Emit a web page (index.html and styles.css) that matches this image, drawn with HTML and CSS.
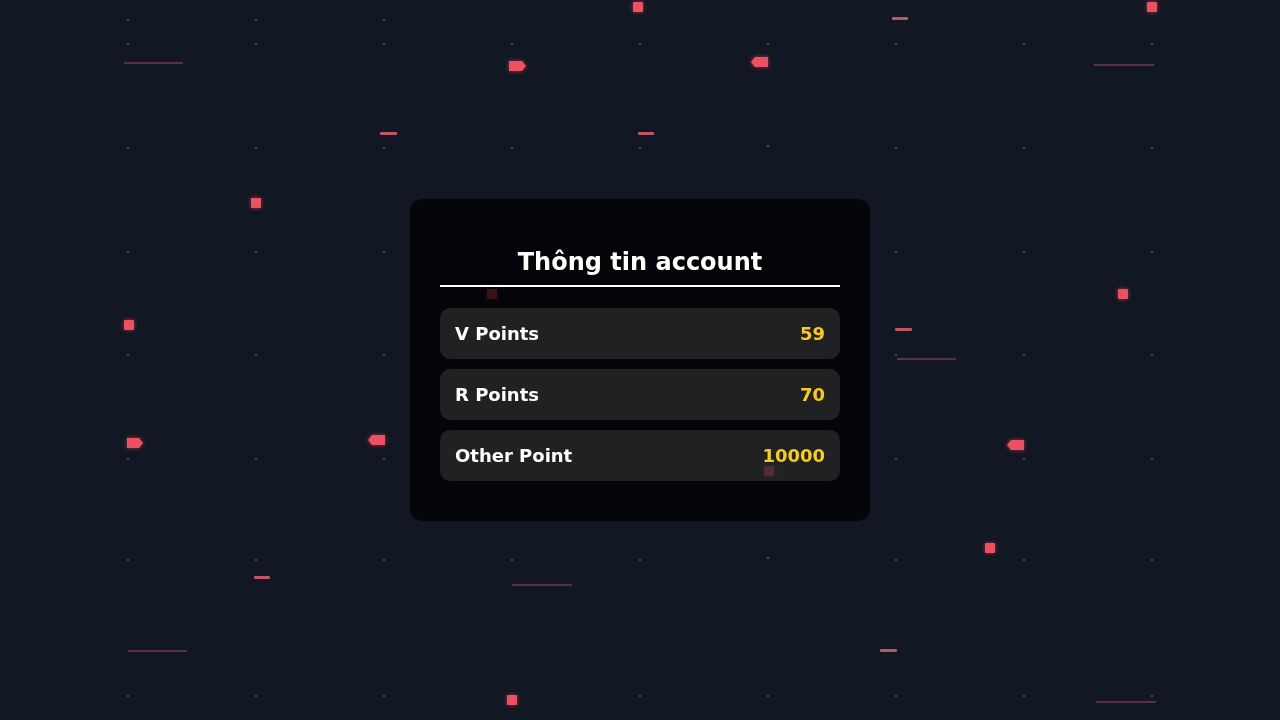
FILE: index.html
```html
<!DOCTYPE html>
<html lang="vi">
<head>
    <meta charset="UTF-8">
    <meta name="viewport" content="width=device-width, initial-scale=1.0">
    <title>Thông tin account</title>
    <link rel="stylesheet" href="styles.css">
</head>
<body>
    <!-- background canvas: grid dots + red particles -->
    <svg class="bg" viewBox="0 0 1280 720" preserveAspectRatio="none" aria-hidden="true">
        <g class="dots">
            <rect x="127" y="19" width="2" height="2"/><rect x="255" y="19" width="2" height="2"/><rect x="383" y="19" width="2" height="2"/>
            <rect x="127" y="43" width="2" height="2"/><rect x="255" y="43" width="2" height="2"/><rect x="383" y="43" width="2" height="2"/><rect x="511" y="43" width="2" height="2"/><rect x="639" y="43" width="2" height="2"/><rect x="767" y="43" width="2" height="2"/><rect x="895" y="43" width="2" height="2"/><rect x="1023" y="43" width="2" height="2"/><rect x="1151" y="43" width="2" height="2"/>
            <rect x="127" y="147" width="2" height="2"/><rect x="255" y="147" width="2" height="2"/><rect x="383" y="147" width="2" height="2"/><rect x="511" y="147" width="2" height="2"/><rect x="639" y="147" width="2" height="2"/><rect x="767" y="145" width="2" height="2"/><rect x="895" y="147" width="2" height="2"/><rect x="1023" y="147" width="2" height="2"/><rect x="1151" y="147" width="2" height="2"/>
            <rect x="127" y="251" width="2" height="2"/><rect x="255" y="251" width="2" height="2"/><rect x="383" y="251" width="2" height="2"/><rect x="895" y="251" width="2" height="2"/><rect x="1023" y="251" width="2" height="2"/><rect x="1151" y="251" width="2" height="2"/>
            <rect x="127" y="354" width="2" height="2"/><rect x="255" y="354" width="2" height="2"/><rect x="383" y="354" width="2" height="2"/><rect x="895" y="354" width="2" height="2"/><rect x="1023" y="354" width="2" height="2"/><rect x="1151" y="354" width="2" height="2"/>
            <rect x="127" y="458" width="2" height="2"/><rect x="255" y="458" width="2" height="2"/><rect x="383" y="458" width="2" height="2"/><rect x="895" y="458" width="2" height="2"/><rect x="1023" y="458" width="2" height="2"/><rect x="1151" y="458" width="2" height="2"/>
            <rect x="127" y="559" width="2" height="2"/><rect x="255" y="559" width="2" height="2"/><rect x="383" y="559" width="2" height="2"/><rect x="511" y="559" width="2" height="2"/><rect x="639" y="559" width="2" height="2"/><rect x="767" y="557" width="2" height="2"/><rect x="895" y="559" width="2" height="2"/><rect x="1023" y="559" width="2" height="2"/><rect x="1151" y="559" width="2" height="2"/>
            <rect x="127" y="695" width="2" height="2"/><rect x="255" y="695" width="2" height="2"/><rect x="383" y="695" width="2" height="2"/><rect x="639" y="695" width="2" height="2"/><rect x="767" y="695" width="2" height="2"/><rect x="895" y="695" width="2" height="2"/><rect x="1023" y="695" width="2" height="2"/><rect x="1151" y="695" width="2" height="2"/>
        </g>
        <g class="trails">
            <rect x="124" y="62" width="59" height="2"/>
            <rect x="1094" y="64" width="60" height="2"/>
            <rect x="897" y="358" width="59" height="2"/>
            <rect x="512" y="584" width="60" height="2"/>
            <rect x="128" y="650" width="59" height="2"/>
            <rect x="1096" y="701" width="60" height="2"/>
        </g>
        <g class="dashes">
            <rect x="892" y="17" width="16" height="3" rx="1"/>
            <rect x="380" y="132" width="17" height="3" rx="1"/>
            <rect x="638" y="132" width="16" height="3" rx="1"/>
            <rect x="895" y="328" width="17" height="3" rx="1"/>
            <rect x="254" y="576" width="16" height="3" rx="1"/>
            <rect x="880" y="649" width="17" height="3" rx="1"/>
        </g>
        <g class="sparks">
            <rect x="633" y="2" width="10" height="10" rx="1"/>
            <rect x="1147" y="2" width="10" height="10" rx="1"/>
            <rect x="251" y="198" width="10" height="10" rx="1"/>
            <rect x="124" y="320" width="10" height="10" rx="1"/>
            <rect x="1118" y="289" width="10" height="10" rx="1"/>
            <rect x="985" y="543" width="10" height="10" rx="1"/>
            <rect x="507" y="695" width="10" height="10" rx="1"/>
            <rect x="487" y="289" width="10" height="10" rx="1"/>
            <rect x="764" y="466" width="10" height="10" rx="1"/>
            <polygon points="509,61 522,61 526,66 522,71 509,71"/>
            <polygon points="127,438 139,438 143,443 139,448 127,448"/>
            <polygon points="751,62 755,57 768,57 768,67 755,67"/>
            <polygon points="368,440 372,435 385,435 385,445 372,445"/>
            <polygon points="1007,445 1011,440 1024,440 1024,450 1011,450"/>
        </g>
    </svg>

    <main class="page">
        <section class="card">
            <h2 class="card-title">Thông tin account</h2>
            <div class="point-row">
                <span class="point-label">V Points</span>
                <span class="point-value">59</span>
            </div>
            <div class="point-row">
                <span class="point-label">R Points</span>
                <span class="point-value">70</span>
            </div>
            <div class="point-row">
                <span class="point-label">Other Point</span>
                <span class="point-value">10000</span>
            </div>
        </section>
    </main>
</body>
</html>
```

FILE: styles.css
```css
body {
    margin: 0;
    background-color: #111823;
    font-family: "DejaVu Sans", "Noto Sans", sans-serif;
    color: #fff;
    overflow: hidden;
}
.bg {
    position: fixed;
    top: 0;
    left: 0;
    width: 100%;
    height: 100%;
}
.dots rect {
    fill: #454d5b;
}
.trails rect {
    fill: #6b3a46;
    opacity: 0.8;
}
.dashes rect {
    fill: #e0606e;
    opacity: 0.85;
}
.sparks rect, .sparks polygon {
    fill: #ee5060;
    filter: drop-shadow(0 0 2px rgba(240, 80, 95, 0.6));
}
.page {
    position: relative;
    min-height: 100vh;
    display: flex;
    align-items: center;
    justify-content: center;
}
.card {
    width: 400px;
    padding: 30px;
    background-color: rgba(0, 0, 0, 0.76);
    border-radius: 12px;
}
.card-title {
    margin: 19px 0 21px;
    padding-bottom: 9px;
    border-bottom: 2px solid #fff;
    font-size: 24px;
    font-weight: bold;
    text-align: center;
}
.point-row {
    display: flex;
    justify-content: space-between;
    align-items: center;
    padding: 15px;
    margin-bottom: 10px;
    background-color: rgba(255, 255, 255, 0.11);
    border-radius: 10px;
    font-size: 18px;
    font-weight: bold;
}
.point-value {
    color: #facc15;
}
```
